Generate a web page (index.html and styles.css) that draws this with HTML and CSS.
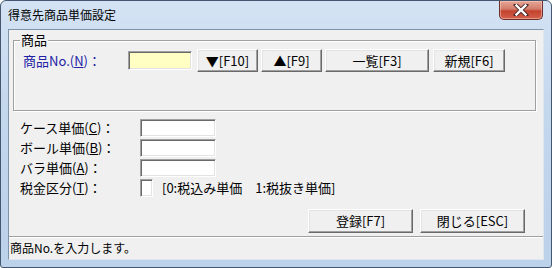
FILE: index.html
```html
<!DOCTYPE html>
<html lang="ja">
<head>
  <meta charset="UTF-8" />
  <title>得意先商品単価設定</title>
  <link rel="stylesheet" href="styles.css">
</head>
<body>
  <div class="window">
    <div class="titlebar">
      <span class="title">得意先商品単価設定</span>
      <div class="close-btn">
        <svg width="16" height="12" viewBox="0 0 16 12">
          <path d="M3 1 L13 11 M13 1 L3 11" stroke="#4a2a2a" stroke-width="4.2" stroke-linecap="square" />
          <path d="M3.5 1.5 L12.5 10.5 M12.5 1.5 L3.5 10.5" stroke="#fff" stroke-width="2.4" stroke-linecap="square" />
        </svg>
      </div>
    </div>

    <div class="client">
      <div class="group">
        <span class="group-title">商品</span>
        <div class="code-row">
          <label class="code-label">商品No.(<u>N</u>)：</label>
          <div class="field field-code"></div>
          <button class="btn btn-next">▼[F10]</button>
          <button class="btn btn-prev">▲[F9]</button>
          <button class="btn btn-list">一覧[F3]</button>
          <button class="btn btn-new">新規[F6]</button>
        </div>
      </div>

      <div class="prices">
        <label>ケース単価(<u>C</u>)：</label>
        <div class="field field-price"></div>
        <label>ボール単価(<u>B</u>)：</label>
        <div class="field field-price"></div>
        <label>バラ単価(<u>A</u>)：</label>
        <div class="field field-price"></div>
        <label>税金区分(<u>T</u>)：</label>
        <div class="tax-row">
          <div class="field field-tax"></div>
          <span class="tax-note">[0:税込み単価　1:税抜き単価]</span>
        </div>
      </div>

      <div class="actions">
        <button class="btn btn-action">登録[F7]</button>
        <button class="btn btn-action">閉じる[ESC]</button>
      </div>

      <div class="statusbar">商品No.を入力します。</div>
    </div>
  </div>
</body>
</html>
```

FILE: styles.css
```css
* {
  margin: 0;
  padding: 0;
  box-sizing: border-box;
}

body {
  font-family: "Noto Sans CJK JP", "Noto Sans", sans-serif;
  font-size: 13px;
  color: #000;
  background: #fff;
}

.window {
  width: 552px;
  height: 268px;
  border: 1px solid #44576e;
  border-radius: 6px 6px 3px 3px;
  background: linear-gradient(to bottom, #d4e3f4, #c3d7ed 40%, #bcd1ea);
  padding: 0 7px 7px 7px;
  display: flex;
  flex-direction: column;
}

.titlebar {
  height: 28px;
  display: flex;
  justify-content: space-between;
  align-items: flex-start;
}

.title {
  font-size: 12px;
  line-height: 14px;
  padding-top: 7px;
}

.close-btn {
  width: 44px;
  height: 19px;
  margin-right: 1px;
  border: 1px solid #6b3028;
  border-top: none;
  border-radius: 0 0 5px 5px;
  background: linear-gradient(to bottom, #e6a796, #d27b6a 45%, #c4432f 55%, #d2604a);
  box-shadow: inset 0 0 0 1px rgba(255, 210, 200, 0.5);
  display: flex;
  justify-content: center;
  align-items: center;
}

.client {
  flex: 1;
  background: #f0f0f0;
  border: 1px solid #7f93a9;
  border-right-color: #dfe6ee;
  border-bottom-color: #dfe6ee;
  display: flex;
  flex-direction: column;
}

/* group box */
.group {
  position: relative;
  margin: 10px 7px 0 4px;
  height: 71px;
  border: 1px solid #a0a0a0;
  box-shadow: inset 1px 1px 0 #fff, 1px 1px 0 #fff;
  padding: 8px 0 0 9px;
}

.group-title {
  position: absolute;
  top: -9px;
  left: 6px;
  padding: 0 1px;
  background: #f0f0f0;
  line-height: 16px;
}

.code-row {
  display: flex;
  align-items: center;
  height: 23px;
}

.code-label {
  width: 105px;
  color: #2222a6;
  line-height: 16px;
}

.field {
  background: #fff;
  border: 1px solid;
  border-color: #a0a0a0 #fff #fff #a0a0a0;
  box-shadow: inset 1px 1px 0 #696969, inset -1px -1px 0 #e3e3e3;
}

.field-code {
  width: 64px;
  height: 19px;
  background: #ffffc4;
  margin-right: 5px;
}

.btn {
  font-family: inherit;
  font-size: 13px;
  line-height: 16px;
  color: #000;
  background: #f0f0f0;
  height: 23px;
  border: 1px solid;
  border-color: #fff #696969 #696969 #fff;
  box-shadow: inset -1px -1px 0 #a0a0a0, inset 1px 1px 0 #e3e3e3;
}

.btn-next {
  width: 61px;
}

.btn-prev {
  width: 61px;
  margin-left: 3px;
}

.btn-list {
  width: 104px;
  margin-left: 3px;
}

.btn-new {
  width: 72px;
  margin-left: 4px;
}

/* price rows */
.prices {
  display: grid;
  grid-template-columns: 120px auto;
  grid-auto-rows: 20px;
  align-items: center;
  margin: 7px 0 0 11px;
}

.prices label {
  line-height: 16px;
}

.field-price {
  width: 76px;
  height: 18px;
}

.tax-row {
  display: flex;
  align-items: center;
}

.field-tax {
  width: 13px;
  height: 18px;
}

.tax-note {
  margin-left: 9px;
  line-height: 16px;
}

/* bottom buttons */
.actions {
  display: flex;
  justify-content: flex-end;
  gap: 7px;
  margin: 11px 18px 0 0;
}

.btn-action {
  width: 105px;
  height: 24px;
}

.statusbar {
  margin-top: auto;
  height: 23px;
  border-top: 1px solid #a0a0a0;
  box-shadow: inset 0 1px 0 #fff;
  font-size: 12px;
  line-height: 21px;
  padding-left: 1px;
}
```
